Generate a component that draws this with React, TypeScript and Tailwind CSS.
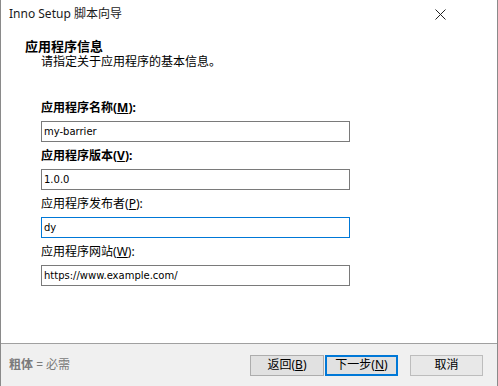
const cjk = { fontFamily: '"Noto Sans", "Noto Sans CJK SC", sans-serif' };
const mono = { fontFamily: '"DejaVu Sans", "Noto Sans CJK SC", sans-serif' };

const Field = ({
  label,
  mnemonic,
  value,
  bold,
  focused,
}: {
  label: string;
  mnemonic: string;
  value: string;
  bold?: boolean;
  focused?: boolean;
}) => (
  <div className="flex flex-col">
    <div className={`h-[21px] text-[12px] leading-[16px] text-black ${bold ? 'font-bold' : ''}`}>
      {label}(<span className="underline">{mnemonic}</span>):
    </div>
    <div
      className={`w-[309px] h-[21px] flex items-center px-[2px] bg-white border ${
        focused ? 'border-[#0078d7]' : 'border-[#7a7a7a]'
      }`}
    >
      <span className="text-[10px] text-black" style={mono}>
        {value}
      </span>
    </div>
  </div>
);

const App = () => {
  return (
    <div className="w-[498px] h-[386px] flex flex-col bg-white border-x border-[#8a8a8a] overflow-hidden" style={cjk}>
      {/* Title bar */}
      <div className="h-[28px] flex items-center justify-between pl-[8px] pr-[51px]">
        <span className="text-[12px] text-[#1a1a1a]">Inno Setup 脚本向导</span>
        <svg width="11" height="11" viewBox="0 0 11 11">
          <path d="M0.5 0.5 L10.5 10.5 M10.5 0.5 L0.5 10.5" stroke="#222" strokeWidth="1" />
        </svg>
      </div>

      {/* Header */}
      <div className="pl-[24px] pt-[11px]">
        <div className="text-[13px] leading-[15px] font-bold text-black">应用程序信息</div>
        <div className="pl-[16px] text-[12px] leading-[16px] text-black">请指定关于应用程序的基本信息。</div>
      </div>

      {/* Fields */}
      <div className="mt-[30px] pl-[40px] flex flex-col gap-[6px]">
        <Field label="应用程序名称" mnemonic="M" value="my-barrier" bold />
        <Field label="应用程序版本" mnemonic="V" value="1.0.0" bold />
        <Field label="应用程序发布者" mnemonic="P" value="dy" focused />
        <Field label="应用程序网站" mnemonic="W" value="https://www.example.com/" />
      </div>

      <div className="flex-1" />

      {/* Footer */}
      <div className="h-[43px] border-t border-[#a0a0a0] bg-[#f0f0f0] flex items-center pl-[8px] pr-[14px]">
        <span className="text-[12px] text-[#7a7a7a]">
          <span className="font-bold">粗体</span> = 必需
        </span>
        <div className="ml-auto flex items-center">
          <button className="w-[74px] h-[21px] bg-[#e1e1e1] border border-[#adadad] text-[12px] leading-none text-black">
            返回(<span className="underline">B</span>)
          </button>
          <button className="ml-px w-[73px] h-[21px] bg-[#e1e1e1] border-2 border-[#0078d7] text-[12px] leading-none text-black">
            下一步(<span className="underline">N</span>)
          </button>
          <button className="ml-[12px] w-[73px] h-[21px] bg-[#e8e8e8] border border-[#bdbdbd] text-[12px] leading-none text-black">
            取消
          </button>
        </div>
      </div>
    </div>
  );
};

export default App;
